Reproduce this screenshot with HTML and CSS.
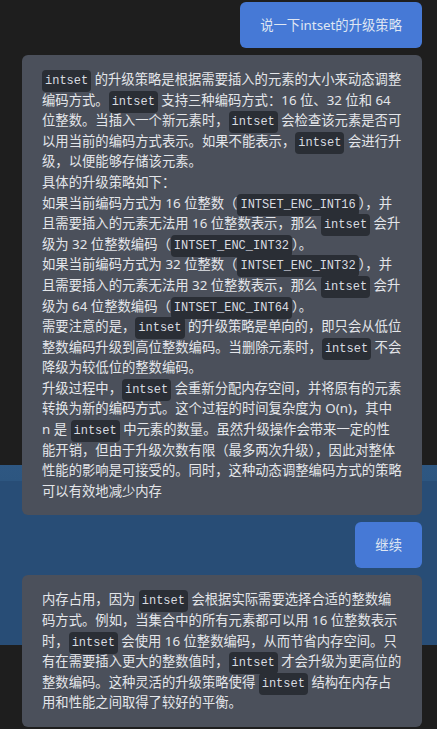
FILE: index.html
```html
<!DOCTYPE html>
<html lang="zh-CN">
<head>
<meta charset="utf-8">
<title>intset</title>
<link rel="stylesheet" href="styles.css">
</head>
<body>
<main class="chat">
  <div class="msg user">说一下intset的升级策略</div>
  <div class="msg bot">
    <p><code>intset</code> 的升级策略是根据需要插入的元素的大小来动态调整编码方式。<code>intset</code> 支持三种编码方式：16 位、32 位和 64 位整数。当插入一个新元素时，<code>intset</code> 会检查该元素是否可以用当前的编码方式表示。如果不能表示，<code>intset</code> 会进行升级，以便能够存储该元素。</p>
    <p>具体的升级策略如下：</p>
    <p>如果当前编码方式为 16 位整数（<code>INTSET_ENC_INT16</code>），并且需要插入的元素无法用 16 位整数表示，那么 <code>intset</code> 会升级为 32 位整数编码（<code>INTSET_ENC_INT32</code>）。</p>
    <p>如果当前编码方式为 32 位整数（<code>INTSET_ENC_INT32</code>），并且需要插入的元素无法用 32 位整数表示，那么 <code>intset</code> 会升级为 64 位整数编码（<code>INTSET_ENC_INT64</code>）。</p>
    <p>需要注意的是，<code>intset</code> 的升级策略是单向的，即只会从低位整数编码升级到高位整数编码。当删除元素时，<code>intset</code> 不会降级为较低位的整数编码。</p>
    <p>升级过程中，<code>intset</code> 会重新分配内存空间，并将原有的元素转换为新的编码方式。这个过程的时间复杂度为 O(n)，其中 n 是 <code>intset</code> 中元素的数量。虽然升级操作会带来一定的性能开销，但由于升级次数有限（最多两次升级），因此对整体性能的影响是可接受的。同时，这种动态调整编码方式的策略可以有效地减少内存</p>
  </div>
  <div class="msg user">继续</div>
  <div class="msg bot">
    <p>内存占用，因为 <code>intset</code> 会根据实际需要选择合适的整数编码方式。例如，当集合中的所有元素都可以用 16 位整数表示时，<code>intset</code> 会使用 16 位整数编码，从而节省内存空间。只有在需要插入更大的整数值时，<code>intset</code> 才会升级为更高位的整数编码。这种灵活的升级策略使得 <code>intset</code> 结构在内存占用和性能之间取得了较好的平衡。</p>
  </div>
</main>
</body>
</html>
```
FILE: styles.css
```css
html, body {
  margin: 0;
  padding: 0;
}
body {
  min-height: 729px;
  background: linear-gradient(to bottom,
    #1e1e1e 0, #1e1e1e 465px,
    #2e5782 465px, #2d5680 481px,
    #284d76 481px, #284d76 645px,
    #1e1e1e 645px, #1e1e1e 100%);
  font-family: "Noto Sans", "Noto Sans CJK SC", sans-serif;
  font-size: 13.33px;
  line-height: 20.6px;
  color: #e4e6ea;
}
.chat {
  display: flex;
  flex-direction: column;
  align-items: flex-end;
  gap: 7px;
  padding: 2px 15px 0 22px;
}
.msg {
  border-radius: 6px;
  box-sizing: border-box;
}
.user {
  background: #4679d6;
  color: #dfe6f3;
  padding: 12.7px 20px;
}
.bot {
  width: 400px;
  background: #4b505b;
  padding: 14px 20px;
}
.bot p {
  margin: 0;
}
code {
  font-family: "Liberation Mono", monospace;
  font-size: 12px;
  line-height: 1;
  background: #2a2e35;
  color: #d9dce1;
  border-radius: 4px;
  padding: 4px 3px;
}
```
